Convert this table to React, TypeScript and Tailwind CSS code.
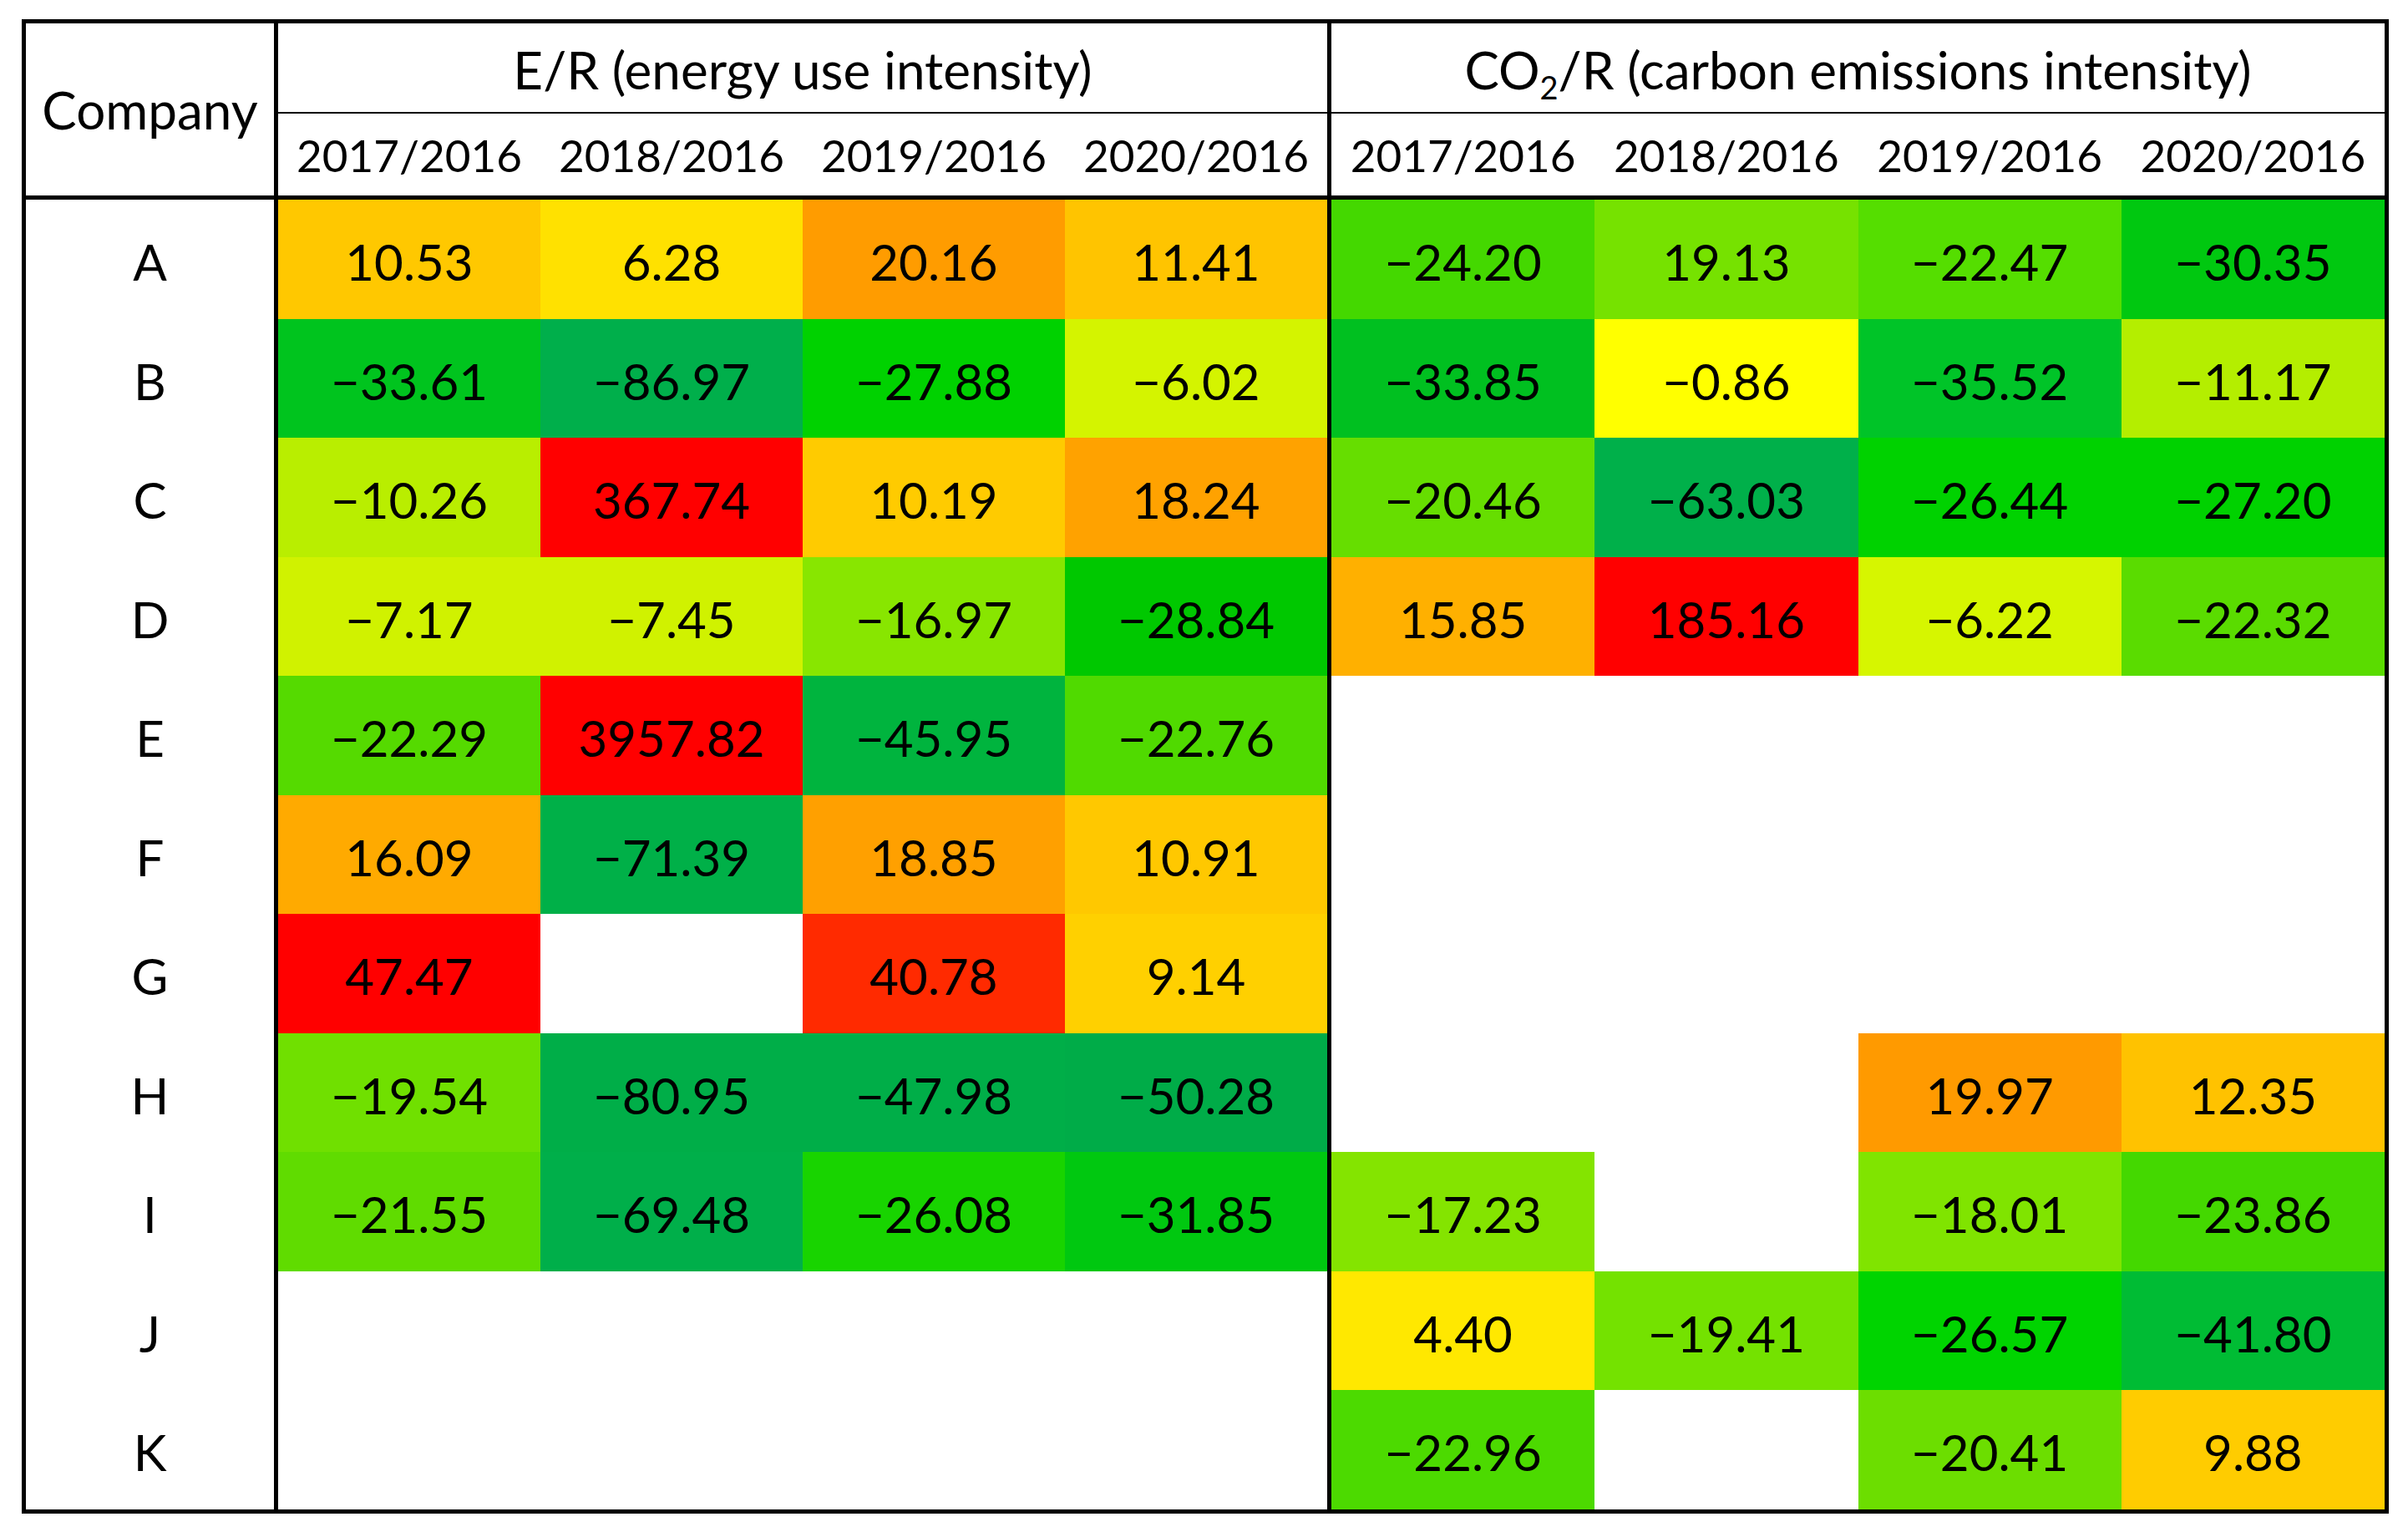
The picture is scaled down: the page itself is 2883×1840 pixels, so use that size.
type Cell = { v: string; bg: string } | null;

const years = ["2017/2016", "2018/2016", "2019/2016", "2020/2016"];

// company rows: energy intensity (E/R) and carbon intensity (CO2/R), change vs 2016 in %
const rows: { id: string; er: Cell[]; co: Cell[] }[] = [
  {
    id: "A",
    er: [
      { v: "10.53", bg: "bg-[#ffc800]" },
      { v: "6.28", bg: "bg-[#ffe100]" },
      { v: "20.16", bg: "bg-[#ff9c00]" },
      { v: "11.41", bg: "bg-[#ffc400]" },
    ],
    co: [
      { v: "−24.20", bg: "bg-[#44d800]" },
      { v: "19.13", bg: "bg-[#76e200]" },
      { v: "−22.47", bg: "bg-[#55de00]" },
      { v: "−30.35", bg: "bg-[#00c810]" },
    ],
  },
  {
    id: "B",
    er: [
      { v: "−33.61", bg: "bg-[#00c41e]" },
      { v: "−86.97", bg: "bg-[#00af4b]" },
      { v: "−27.88", bg: "bg-[#00d200]" },
      { v: "−6.02", bg: "bg-[#d4f400]" },
    ],
    co: [
      { v: "−33.85", bg: "bg-[#00c020]" },
      { v: "−0.86", bg: "bg-[#ffff00]" },
      { v: "−35.52", bg: "bg-[#00c428]" },
      { v: "−11.17", bg: "bg-[#b4ee00]" },
    ],
  },
  {
    id: "C",
    er: [
      { v: "−10.26", bg: "bg-[#b9ee00]" },
      { v: "367.74", bg: "bg-[#ff0000]" },
      { v: "10.19", bg: "bg-[#ffcb00]" },
      { v: "18.24", bg: "bg-[#ffa200]" },
    ],
    co: [
      { v: "−20.46", bg: "bg-[#66de00]" },
      { v: "−63.03", bg: "bg-[#00b04a]" },
      { v: "−26.44", bg: "bg-[#00d200]" },
      { v: "−27.20", bg: "bg-[#00d200]" },
    ],
  },
  {
    id: "D",
    er: [
      { v: "−7.17", bg: "bg-[#d0f200]" },
      { v: "−7.45", bg: "bg-[#d0f200]" },
      { v: "−16.97", bg: "bg-[#88e600]" },
      { v: "−28.84", bg: "bg-[#00c800]" },
    ],
    co: [
      { v: "15.85", bg: "bg-[#ffb000]" },
      { v: "185.16", bg: "bg-[#ff0000]" },
      { v: "−6.22", bg: "bg-[#d6f600]" },
      { v: "−22.32", bg: "bg-[#5adc00]" },
    ],
  },
  {
    id: "E",
    er: [
      { v: "−22.29", bg: "bg-[#55da00]" },
      { v: "3957.82", bg: "bg-[#ff0000]" },
      { v: "−45.95", bg: "bg-[#00b43e]" },
      { v: "−22.76", bg: "bg-[#50da00]" },
    ],
    co: [null, null, null, null],
  },
  {
    id: "F",
    er: [
      { v: "16.09", bg: "bg-[#ffaa00]" },
      { v: "−71.39", bg: "bg-[#00b048]" },
      { v: "18.85", bg: "bg-[#ffa000]" },
      { v: "10.91", bg: "bg-[#ffc800]" },
    ],
    co: [null, null, null, null],
  },
  {
    id: "G",
    er: [
      { v: "47.47", bg: "bg-[#ff0000]" },
      null,
      { v: "40.78", bg: "bg-[#ff2a00]" },
      { v: "9.14", bg: "bg-[#ffd000]" },
    ],
    co: [null, null, null, null],
  },
  {
    id: "H",
    er: [
      { v: "−19.54", bg: "bg-[#70e000]" },
      { v: "−80.95", bg: "bg-[#00ae48]" },
      { v: "−47.98", bg: "bg-[#00ae48]" },
      { v: "−50.28", bg: "bg-[#00ac48]" },
    ],
    co: [
      null,
      null,
      { v: "19.97", bg: "bg-[#ff9a00]" },
      { v: "12.35", bg: "bg-[#ffc200]" },
    ],
  },
  {
    id: "I",
    er: [
      { v: "−21.55", bg: "bg-[#60dc00]" },
      { v: "−69.48", bg: "bg-[#00af4a]" },
      { v: "−26.08", bg: "bg-[#18d400]" },
      { v: "−31.85", bg: "bg-[#00c810]" },
    ],
    co: [
      { v: "−17.23", bg: "bg-[#84e400]" },
      null,
      { v: "−18.01", bg: "bg-[#80e400]" },
      { v: "−23.86", bg: "bg-[#44d800]" },
    ],
  },
  {
    id: "J",
    er: [null, null, null, null],
    co: [
      { v: "4.40", bg: "bg-[#ffe800]" },
      { v: "−19.41", bg: "bg-[#74e200]" },
      { v: "−26.57", bg: "bg-[#00d400]" },
      { v: "−41.80", bg: "bg-[#00bc34]" },
    ],
  },
  {
    id: "K",
    er: [null, null, null, null],
    co: [
      { v: "−22.96", bg: "bg-[#4cda00]" },
      null,
      { v: "−20.41", bg: "bg-[#6cde00]" },
      { v: "9.88", bg: "bg-[#ffcc00]" },
    ],
  },
];

function Group({
  title,
  cells,
  className,
}: {
  title: React.ReactNode;
  cells: Cell[][];
  className?: string;
}) {
  return (
    <div className={`flex flex-col ${className ?? ""}`}>
      <div className="h-[108px] pt-[3px] border-b-2 border-black flex items-center justify-center text-[62px]">
        {title}
      </div>
      <div className="h-[103px] border-b-[5px] border-black grid grid-cols-4 text-[53px]">
        {years.map((y) => (
          <div key={y} className="flex items-center justify-center">
            {y}
          </div>
        ))}
      </div>
      <div className="grid grid-cols-4 auto-rows-[142.5px]">
        {cells.flat().map((c, i) =>
          c ? (
            <div key={i} className={`flex items-center justify-center pt-[6px] ${c.bg}`}>
              {c.v}
            </div>
          ) : (
            <div key={i} className="bg-white" />
          )
        )}
      </div>
    </div>
  );
}

export default function App() {
  return (
    <div className="w-[2883px] h-[1840px] bg-white pt-[23px] pl-[26px] font-[Lato,sans-serif] text-[60px] leading-none text-black">
      <div className="w-[2834px] border-[5px] border-black flex">
        {/* Company column */}
        <div className="w-[302px] border-r-[5px] border-black flex flex-col">
          <div className="h-[211px] border-b-[5px] border-black flex items-center justify-center text-[62px]">
            Company
          </div>
          {rows.map((r) => (
            <div key={r.id} className="h-[142.5px] pt-[6px] flex items-center justify-center">
              {r.id}
            </div>
          ))}
        </div>

        <Group
          title="E/R (energy use intensity)"
          cells={rows.map((r) => r.er)}
          className="w-[1261px] border-r-[5px] border-black"
        />
        <Group
          title={
            <span>
              CO<sub className="text-[38px] align-baseline relative top-[12px]">2</sub>/R (carbon emissions intensity)
            </span>
          }
          cells={rows.map((r) => r.co)}
          className="flex-1"
        />
      </div>
    </div>
  );
}
